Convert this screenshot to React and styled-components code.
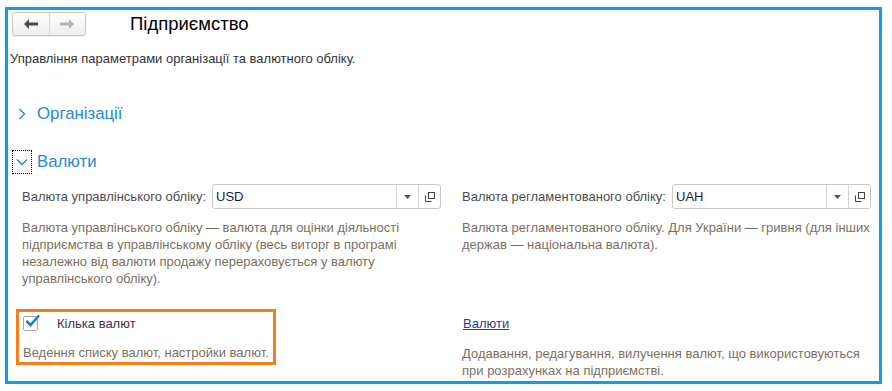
import { createGlobalStyle, styled } from "styled-components";

const Global = createGlobalStyle`
  html, body {
    margin: 0;
    padding: 0;
    background: #fff;
    font-family: "Liberation Sans", Arial, sans-serif;
  }
`;

const Frame = styled.div`
  box-sizing: border-box;
  margin: 7px 0 0 5px;
  width: 877px;
  height: 377px;
  border: 3px solid #0aa1e4;
  overflow: hidden;
  padding: 2px 0 0 4px;
`;

const Header = styled.div`
  display: flex;
  align-items: center;
  height: 24px;
`;

const NavGroup = styled.div`
  display: flex;
  box-sizing: border-box;
  width: 74px;
  height: 24px;
  border: 1px solid #c6c6c6;
  border-radius: 3px;
  background: linear-gradient(#ffffff, #ededed);
  box-shadow: 0 1px 1px rgba(0, 0, 0, 0.08);
`;

const NavButton = styled.div`
  flex: 1;
  display: flex;
  align-items: center;
  justify-content: center;
  & + & {
    border-left: 1px solid #d6d6d6;
  }
`;

const Title = styled.h1`
  margin: 0 0 0 44px;
  font-size: 18.5px;
  font-weight: normal;
  color: #000;
`;

const Intro = styled.p`
  margin: 15px 0 0 -2px;
  font-size: 13px;
  color: #333;
`;

const Group = styled.div`
  display: flex;
  align-items: center;
  margin: ${(p) => p.$mt}px 0 0 0;
  height: 24px;
`;

const Toggle = styled.div`
  box-sizing: border-box;
  width: 20px;
  height: 24px;
  display: flex;
  align-items: center;
  justify-content: center;
  border: 1px dotted ${(p) => (p.$focused ? "#000" : "transparent")};
`;

const GroupTitle = styled.span`
  margin-left: 5px;
  font-size: 16.8px;
  color: #1f8ad3;
`;

const Columns = styled.div`
  display: grid;
  grid-template-columns: 420px 410px;
  column-gap: 20px;
  margin: 10px 0 0 10px;
`;

const Column = styled.div`
  display: flex;
  flex-direction: column;
`;

const FieldRow = styled.div`
  display: flex;
  align-items: center;
  height: 25px;
`;

const Label = styled.span`
  width: ${(p) => p.$w}px;
  font-size: 13px;
  color: #4d4d4d;
  white-space: nowrap;
`;

const Input = styled.div`
  box-sizing: border-box;
  display: flex;
  width: ${(p) => p.$w}px;
  height: 25px;
  border: 1px solid #c8c8c8;
  border-radius: 3px;
  background: #fff;
`;

const Value = styled.span`
  flex: 1;
  padding-left: 3px;
  line-height: 23px;
  font-size: 13px;
  color: #1a1a40;
`;

const InputButton = styled.div`
  width: 21px;
  display: flex;
  align-items: center;
  justify-content: center;
  border-left: 1px solid #d4d4d4;
`;

const Note = styled.p`
  margin: ${(p) => p.$mt}px 0 0 0;
  font-size: 13px;
  line-height: 17px;
  color: #7d6f5d;
`;

const Highlight = styled.div`
  box-sizing: border-box;
  margin: 22px 0 0 -6px;
  width: 260px;
  height: 56px;
  border: 3px solid #f57f1f;
  padding: 3px 0 0 4px;
`;

const CheckRow = styled.label`
  display: flex;
  align-items: center;
  height: 16px;
`;

const CheckBox = styled.span`
  box-sizing: border-box;
  width: 15px;
  height: 15px;
  border: 1px solid #a9a9a9;
  border-radius: 2px;
  background: #fff;
  position: relative;
`;

const CheckLabel = styled.span`
  margin-left: 19px;
  font-size: 13px;
  color: #3c3452;
`;

const Link = styled.a`
  display: block;
  margin: 63px 0 0 1px;
  font-size: 13px;
  color: #1b3fb0;
  text-decoration: underline;
  height: 16px;
`;

const BackIcon = ({ color }) => (
  <svg width="14" height="10" viewBox="0 0 14 10">
    <path d="M0 5 L5 0 L5 3.5 L14 3.5 L14 6.5 L5 6.5 L5 10 Z" fill={color} />
  </svg>
);

const ForwardIcon = ({ color }) => (
  <svg width="14" height="10" viewBox="0 0 14 10">
    <path d="M14 5 L9 0 L9 3.5 L0 3.5 L0 6.5 L9 6.5 L9 10 Z" fill={color} />
  </svg>
);

const Chevron = ({ open }) => (
  <svg width="12" height="12" viewBox="0 0 12 12">
    <path
      d={open ? "M1 3.5 L6 8.5 L11 3.5" : "M3.5 1 L8.5 6 L3.5 11"}
      fill="none"
      stroke="#1f8ad3"
      strokeWidth="1.4"
    />
  </svg>
);

const DropIcon = () => (
  <svg width="7" height="4" viewBox="0 0 7 4">
    <path d="M0 0 L7 0 L3.5 4 Z" fill="#555" />
  </svg>
);

const OpenIcon = () => (
  <svg width="10" height="10" viewBox="0 0 10 10">
    <rect x="3.5" y="0.5" width="6" height="6" fill="none" stroke="#444" />
    <path d="M0.5 3.5 V9.5 H6.5" fill="none" stroke="#444" />
  </svg>
);

const CheckMark = () => (
  <svg
    width="16"
    height="14"
    viewBox="0 0 16 14"
    style={{ position: "absolute", left: 1, top: -3 }}
  >
    <path d="M1.5 7 L5.5 11 L14 1.5" fill="none" stroke="#1a7fd3" strokeWidth="2.6" />
  </svg>
);

const SelectField = ({ label, labelWidth, value, width }) => (
  <FieldRow>
    <Label $w={labelWidth}>{label}</Label>
    <Input $w={width}>
      <Value>{value}</Value>
      <InputButton>
        <DropIcon />
      </InputButton>
      <InputButton>
        <OpenIcon />
      </InputButton>
    </Input>
  </FieldRow>
);

export default function App() {
  return (
    <>
      <Global />
      <Frame>
        <Header>
          <NavGroup>
            <NavButton>
              <BackIcon color="#4a4a4a" />
            </NavButton>
            <NavButton>
              <ForwardIcon color="#b4b4b4" />
            </NavButton>
          </NavGroup>
          <Title>Підприємство</Title>
        </Header>
        <Intro>Управління параметрами організації та валютного обліку.</Intro>

        <Group $mt={36}>
          <Toggle>
            <Chevron />
          </Toggle>
          <GroupTitle>Організації</GroupTitle>
        </Group>

        <Group $mt={24}>
          <Toggle $focused>
            <Chevron open />
          </Toggle>
          <GroupTitle>Валюти</GroupTitle>
        </Group>

        <Columns>
          <Column>
            <SelectField
              label="Валюта управлінського обліку:"
              labelWidth={190}
              value="USD"
              width={229}
            />
            <Note $mt={10}>
              Валюта управлінського обліку — валюта для оцінки діяльності
              <br />
              підприємства в управлінському обліку (весь виторг в програмі
              <br />
              незалежно від валюти продажу перераховується у валюту
              <br />
              управлінського обліку).
            </Note>
            <Highlight>
              <CheckRow>
                <CheckBox>
                  <CheckMark />
                </CheckBox>
                <CheckLabel>Кілька валют</CheckLabel>
              </CheckRow>
              <Note $mt={13}>Ведення списку валют, настройки валют.</Note>
            </Highlight>
          </Column>
          <Column>
            <SelectField
              label="Валюта регламентованого обліку:"
              labelWidth={210}
              value="UAH"
              width={199}
            />
            <Note $mt={10}>
              Валюта регламентованого обліку. Для України — гривня (для інших
              <br />
              держав — національна валюта).
            </Note>
            <Link>Валюти</Link>
            <Note $mt={13}>
              Додавання, редагування, вилучення валют, що використовуються
              <br />
              при розрахунках на підприємстві.
            </Note>
          </Column>
        </Columns>
      </Frame>
    </>
  );
}
